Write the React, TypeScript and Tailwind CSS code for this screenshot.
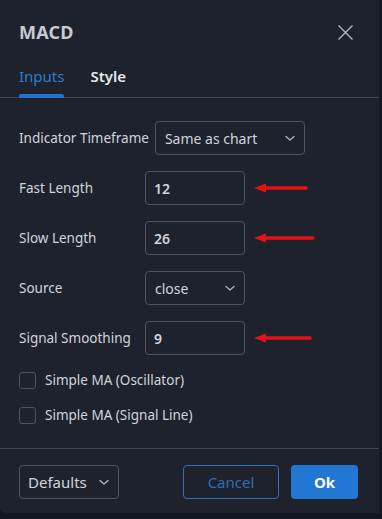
import React from "react";

const font = { fontFamily: '"Noto Sans", "Open Sans", sans-serif' };

function Chevron({ className = "" }: { className?: string }) {
  return (
    <svg width="12" height="8" viewBox="0 0 12 8" className={className} fill="none">
      <path d="M2 2.5 L6 6 L10 2.5" stroke="#b2b5be" strokeWidth="1.3" strokeLinecap="round" strokeLinejoin="round" />
    </svg>
  );
}

function Arrow({ width }: { width: number }) {
  return (
    <svg width={width} height="12" viewBox={`0 0 ${width} 12`} className="ml-[8px]">
      <path d={`M12 6 L${width - 2} 6`} stroke="#e31313" strokeWidth="3.5" strokeLinecap="round" />
      <path d="M1 6 L13 1.5 L13 10.5 Z" fill="#e31313" />
    </svg>
  );
}

function Row({ label, children }: { label: string; children: React.ReactNode }) {
  return (
    <div className="flex items-center h-[34px]">
      <div className="w-[126px] text-[13.5px] text-[#d1d4dc]">{label}</div>
      {children}
    </div>
  );
}

function NumInput({ value }: { value: string }) {
  return (
    <div className="w-[100px] h-[34px] border border-[#50535e] rounded-[4px] flex items-center px-[8px] text-[14px] font-semibold text-[#d1d4dc]">
      {value}
    </div>
  );
}

export default function App() {
  return (
    <div className="w-[382px] h-[519px] bg-[#131722] overflow-hidden" style={font}>
      <div className="w-[379px] h-[513px] bg-[#1e222d] rounded-bl-[6px] flex flex-col">
        <div className="h-[64px] px-[19px] flex items-center justify-between">
          <div className="text-[18px] font-bold text-[#c8cad1] tracking-[0.2px]">MACD</div>
          <svg width="17" height="17" viewBox="0 0 17 17" className="mr-[6px]">
            <path d="M1.5 1.5 L15.5 15.5 M15.5 1.5 L1.5 15.5" stroke="#b2b5be" strokeWidth="1.4" />
          </svg>
        </div>
        <div className="h-[34px] px-[19px] flex items-start gap-[26px] border-b border-[#434651]">
          <div className="flex flex-col items-stretch">
            <div className="text-[15px] text-[#2f7bd0] leading-[24px]">Inputs</div>
            <div className="h-[4px] mt-[6px] bg-[#2271cf] rounded-t-[2px]" />
          </div>
          <div className="text-[15px] font-semibold text-[#e6e7ea] leading-[24px]">Style</div>
        </div>
        <div className="px-[19px] pt-[23px] flex flex-col gap-[16px]">
          <div className="flex items-center h-[34px] gap-[6px]">
            <div className="text-[13.5px] text-[#d1d4dc]">Indicator Timeframe</div>
            <div className="w-[150px] h-[34px] border border-[#50535e] rounded-[4px] flex items-center justify-between pl-[9px] pr-[8px] text-[14px] text-[#d1d4dc]">
              <span>Same as chart</span>
              <Chevron />
            </div>
          </div>
          <Row label="Fast Length">
            <NumInput value="12" />
            <Arrow width={55} />
          </Row>
          <Row label="Slow Length">
            <NumInput value="26" />
            <Arrow width={62} />
          </Row>
          <Row label="Source">
            <div className="w-[100px] h-[34px] border border-[#50535e] rounded-[4px] flex items-center justify-between pl-[9px] pr-[8px] text-[14px] text-[#d1d4dc]">
              <span>close</span>
              <Chevron />
            </div>
          </Row>
          <Row label="Signal Smoothing">
            <NumInput value="9" />
            <Arrow width={59} />
          </Row>
          <div className="flex flex-col gap-[18px] mt-[1px]">
            <div className="flex items-center gap-[9px] h-[17px]">
              <div className="w-[17px] h-[17px] border border-[#50535e] rounded-[3px]" />
              <span className="text-[13.5px] text-[#d1d4dc]">Simple MA (Oscillator)</span>
            </div>
            <div className="flex items-center gap-[9px] h-[17px]">
              <div className="w-[17px] h-[17px] border border-[#50535e] rounded-[3px]" />
              <span className="text-[13.5px] text-[#d1d4dc]">Simple MA (Signal Line)</span>
            </div>
          </div>
        </div>
        <div className="mt-[24px] border-t border-[#434651] pl-[19px] pr-[21px] pt-[16px] flex items-center">
          <div className="w-[100px] h-[34px] border border-[#50535e] rounded-[4px] flex items-center justify-between pl-[8px] pr-[8px] text-[15px] text-[#d1d4dc]">
            <span>Defaults</span>
            <Chevron />
          </div>
          <div className="flex-1" />
          <div className="w-[96px] h-[34px] border border-[#2f6fb8] rounded-[4px] flex items-center justify-center text-[15px] text-[#2f6fb0]">
            Cancel
          </div>
          <div className="w-[67px] h-[34px] ml-[12px] bg-[#2276d4] rounded-[4px] flex items-center justify-center text-[15px] font-bold text-white">
            Ok
          </div>
        </div>
      </div>
    </div>
  );
}
